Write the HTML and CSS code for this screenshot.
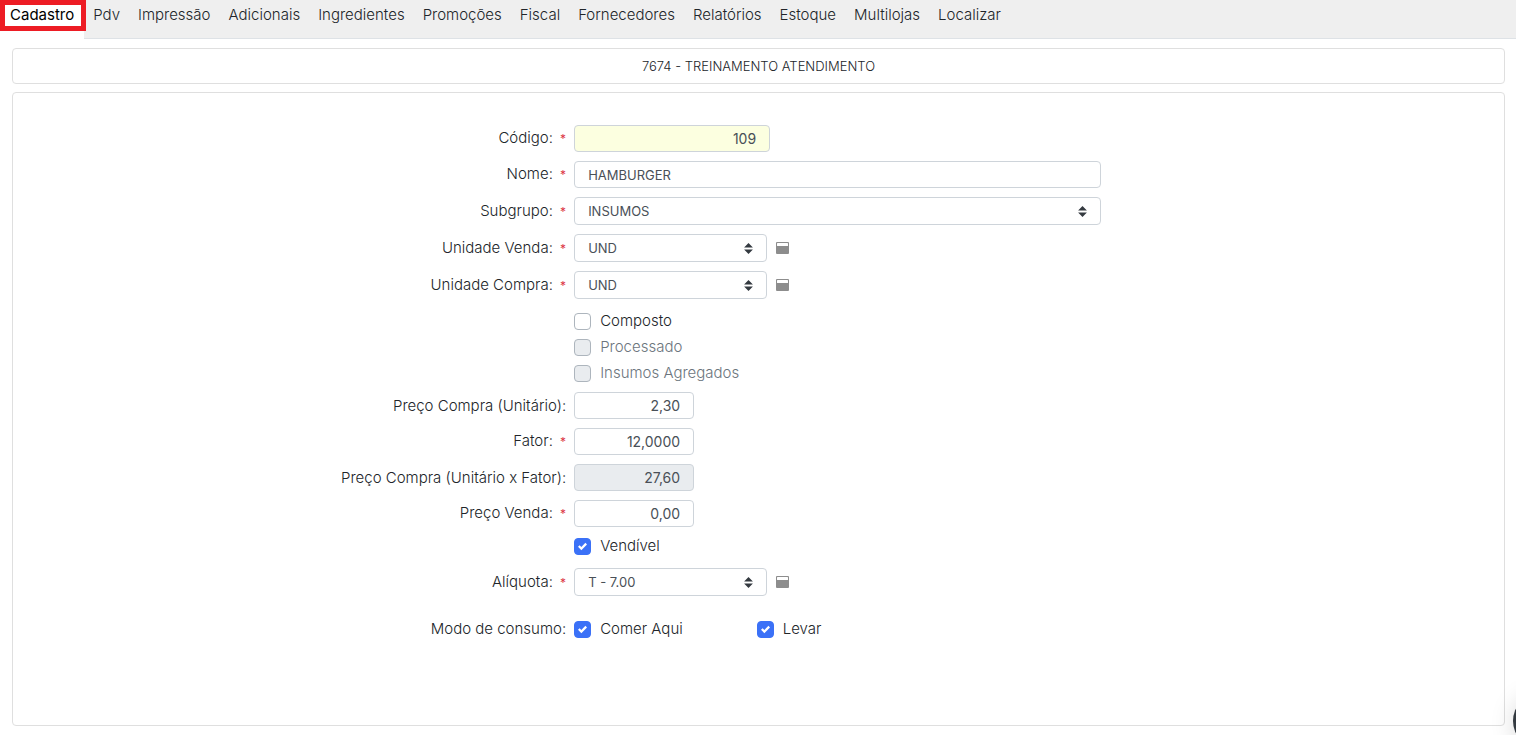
FILE: index.html
```html
<!DOCTYPE html>
<html lang="pt-BR">
<head>
  <meta charset="UTF-8">
  <title>Cadastro</title>
  <link rel="stylesheet" href="styles.css">
</head>
<body>
  <svg class="defs" aria-hidden="true">
    <symbol id="window" viewBox="0 0 13 12">
      <rect width="13" height="12" rx="1" fill="#8d8d8d"/>
      <rect x="1" y="1" width="11" height="3" rx="0.5" fill="#fff"/>
    </symbol>
  </svg>

  <nav class="tabs">
    <a class="tab active" href="#">Cadastro</a>
    <a class="tab" href="#">Pdv</a>
    <a class="tab" href="#">Impressão</a>
    <a class="tab" href="#">Adicionais</a>
    <a class="tab" href="#">Ingredientes</a>
    <a class="tab" href="#">Promoções</a>
    <a class="tab" href="#">Fiscal</a>
    <a class="tab" href="#">Fornecedores</a>
    <a class="tab" href="#">Relatórios</a>
    <a class="tab" href="#">Estoque</a>
    <a class="tab" href="#">Multilojas</a>
    <a class="tab" href="#">Localizar</a>
  </nav>

  <main class="page">
    <div class="title">7674 - TREINAMENTO ATENDIMENTO</div>

    <form class="panel">
      <div class="row">
        <label class="label" for="codigo">Código: <span class="req">*</span></label>
        <input class="control code num" id="codigo" type="text" value="109">
      </div>
      <div class="row">
        <label class="label" for="nome">Nome: <span class="req">*</span></label>
        <input class="control" id="nome" type="text" value="HAMBURGER">
      </div>
      <div class="row">
        <label class="label" for="subgrupo">Subgrupo: <span class="req">*</span></label>
        <select class="control" id="subgrupo"><option>INSUMOS</option></select>
      </div>
      <div class="row">
        <label class="label" for="un-venda">Unidade Venda: <span class="req">*</span></label>
        <div class="field">
          <select class="control unit" id="un-venda"><option>UND</option></select>
          <button class="icon-btn" type="button" aria-label="Abrir unidades"><svg><use href="#window"/></svg></button>
        </div>
      </div>
      <div class="row">
        <label class="label" for="un-compra">Unidade Compra: <span class="req">*</span></label>
        <div class="field">
          <select class="control unit" id="un-compra"><option>UND</option></select>
          <button class="icon-btn" type="button" aria-label="Abrir unidades"><svg><use href="#window"/></svg></button>
        </div>
      </div>

      <div class="row">
        <div class="checks">
          <label class="check"><input type="checkbox"> Composto</label>
          <label class="check off"><input type="checkbox" disabled> Processado</label>
          <label class="check off"><input type="checkbox" disabled> Insumos Agregados</label>
        </div>
      </div>

      <div class="row">
        <label class="label" for="preco-un">Preço Compra (Unitário):</label>
        <input class="control price num" id="preco-un" type="text" value="2,30">
      </div>
      <div class="row">
        <label class="label" for="fator">Fator: <span class="req">*</span></label>
        <input class="control price num" id="fator" type="text" value="12,0000">
      </div>
      <div class="row">
        <label class="label" for="preco-fator">Preço Compra (Unitário x Fator):</label>
        <input class="control price num" id="preco-fator" type="text" value="27,60" disabled>
      </div>
      <div class="row">
        <label class="label" for="preco-venda">Preço Venda: <span class="req">*</span></label>
        <input class="control price num" id="preco-venda" type="text" value="0,00">
      </div>
      <div class="row">
        <div class="checks single">
          <label class="check"><input type="checkbox" checked> Vendível</label>
        </div>
      </div>
      <div class="row">
        <label class="label" for="aliquota">Alíquota: <span class="req">*</span></label>
        <div class="field">
          <select class="control unit" id="aliquota"><option>T - 7.00</option></select>
          <button class="icon-btn" type="button" aria-label="Abrir alíquotas"><svg><use href="#window"/></svg></button>
        </div>
      </div>
      <div class="row consumo" role="group" aria-labelledby="modo">
        <span class="label" id="modo">Modo de consumo:</span>
        <div class="modes">
          <label class="check"><input type="checkbox" checked> Comer Aqui</label>
          <label class="check"><input type="checkbox" checked> Levar</label>
        </div>
      </div>
    </form>
  </main>

  <button class="help" type="button" aria-label="Ajuda"></button>
</body>
</html>
```
FILE: styles.css
```css
*, *::after { box-sizing: border-box; }

body {
  display: flex;
  flex-direction: column;
  min-height: 100vh;
  margin: 0;
  overflow-x: hidden;
  background: #fff;
  color: #212529;
  font: 300 15px/20px Inter, "Liberation Sans", sans-serif;
}

.defs { position: absolute; width: 0; height: 0; }

/* tabs */
.tabs {
  display: flex;
  height: 39px;
  background: #efefef;
  border-bottom: 1px solid #dee2e6;
}
.tab {
  height: 39px;
  padding: 5px 9px;
  color: #212529;
  text-decoration: none;
}
.tab.active {
  position: relative;
  padding: 5px 10px;
  background: #fff;
  color: #000;
  font-weight: 400;
}
.tab.active::after {
  content: "";
  position: absolute;
  top: 0;
  left: 0;
  right: -2px;
  height: 31px;
  border: 5px solid #ed1c24;
}

/* page */
.page {
  flex: 1;
  display: flex;
  flex-direction: column;
  gap: 8px;
  padding: 9px 11px 9px 12px;
}
.title {
  padding: 7px;
  border: 1px solid #dfdfdf;
  border-radius: 4px;
  font-size: 13px;
  text-align: center;
}
.panel {
  flex: 1;
  display: flex;
  flex-direction: column;
  gap: 9px;
  padding: 32px 0;
  border: 1px solid #dfdfdf;
  border-radius: 4px;
}

/* form rows */
.row {
  display: grid;
  grid-template-columns: 42fr 40fr 30fr;
  column-gap: 8px;
  align-items: center;
}
.label { text-align: right; line-height: 24px; }
.req { margin-left: 3px; color: #dc3545; font-size: 12px; font-weight: 400; }

.control {
  width: 100%;
  height: 27px;
  padding: 0 13px;
  background: #fff;
  border: 1px solid #ced4da;
  border-radius: 4px;
  color: #495057;
  font: inherit;
  font-size: 13px;
  font-weight: 400;
}
select.control {
  appearance: none;
  height: 28px;
  background: #fff url("data:image/svg+xml,%3Csvg xmlns='http://www.w3.org/2000/svg' viewBox='0 0 4 5'%3E%3Cpath fill='%23343a40' d='M2 0L0 2h4zm0 5L0 3h4z'/%3E%3C/svg%3E") no-repeat right 13px center / 9px 11px;
}
.control:disabled { background: #e9ecef; }
.code { width: 196px; background: #fcffe0; }
.unit { width: 193px; }
.price { width: 120px; }
.num { font-size: 14px; text-align: right; }

.field { display: flex; align-items: center; gap: 9px; }
.icon-btn { display: flex; padding: 0; background: none; border: 0; }
.icon-btn svg { width: 13px; height: 12px; }

/* checkboxes */
.checks {
  grid-column: 2;
  display: flex;
  flex-direction: column;
  gap: 6px;
  padding-top: 3px;
}
.checks.single { padding: 0 0 3px; }
.check { display: flex; align-items: center; gap: 9px; }
.check.off { color: #6c757d; }
.check input {
  appearance: none;
  width: 17px;
  height: 17px;
  margin: 0;
  background: #fff;
  border: 1px solid #adb5bd;
  border-radius: 4px;
}
.check input:disabled { background: #e9ecef; }
.check input:checked {
  border-color: #3b71f7;
  background: #3b71f7 url("data:image/svg+xml,%3Csvg xmlns='http://www.w3.org/2000/svg' viewBox='0 0 8 8'%3E%3Cpath fill='%23fff' d='M6.564.75l-3.59 3.612-1.538-1.55L0 4.26l2.974 2.99L8 2.193z'/%3E%3C/svg%3E") no-repeat center / 9px 9px;
}
.modes { display: flex; gap: 74px; }
.consumo { margin-top: 12px; }

/* floating button, mostly past the right edge */
.help {
  position: fixed;
  right: -53px;
  bottom: -14px;
  width: 56px;
  height: 56px;
  padding: 0;
  background: #343a40;
  border: 0;
  border-radius: 50%;
  box-shadow: 0 2px 24px rgba(0,0,0,0.15);
}
```
